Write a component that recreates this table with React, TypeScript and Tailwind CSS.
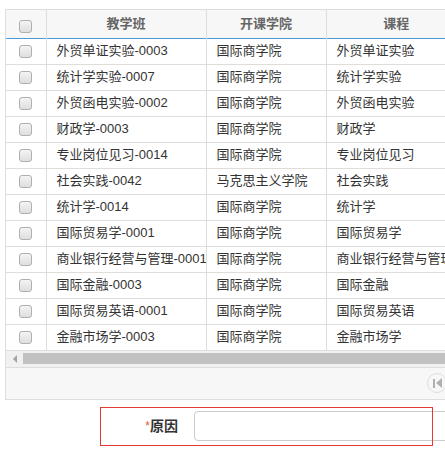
import React from 'react';

const rows = [
  ['外贸单证实验-0003', '国际商学院', '外贸单证实验'],
  ['统计学实验-0007', '国际商学院', '统计学实验'],
  ['外贸函电实验-0002', '国际商学院', '外贸函电实验'],
  ['财政学-0003', '国际商学院', '财政学'],
  ['专业岗位见习-0014', '国际商学院', '专业岗位见习'],
  ['社会实践-0042', '马克思主义学院', '社会实践'],
  ['统计学-0014', '国际商学院', '统计学'],
  ['国际贸易学-0001', '国际商学院', '国际贸易学'],
  ['商业银行经营与管理-0001', '国际商学院', '商业银行经营与管理'],
  ['国际金融-0003', '国际商学院', '国际金融'],
  ['国际贸易英语-0001', '国际商学院', '国际贸易英语'],
  ['金融市场学-0003', '国际商学院', '金融市场学'],
];

const Checkbox = () => (
  <div className="w-[13px] h-[13px] rounded-[3px] border border-[#b0b0b0] bg-gradient-to-b from-[#f4f4f4] to-[#dedede]" />
);

const App = () => {
  return (
    <div className="w-[445px] h-[451px] overflow-hidden bg-white text-[13px] text-[#333] font-['Liberation_Sans','Noto_Sans_CJK_SC',sans-serif]">
      <div className="pt-[9px] pl-[5px]">
        <div className="w-[520px] border border-[#ddd]">
          <table className="table-fixed border-collapse w-[460px]">
            <colgroup>
              <col className="w-[40px]" />
              <col className="w-[160px]" />
              <col className="w-[120px]" />
              <col className="w-[140px]" />
            </colgroup>
            <thead>
              <tr className="h-[28px] bg-[#f7f7f7] border-b border-[#4b9bd6] text-[#666] font-bold">
                <th className="p-0 border-r border-[#ddd]">
                  <div className="flex justify-center pt-[6px]">
                    <Checkbox />
                  </div>
                </th>
                <th className="p-0 border-r border-[#ddd] font-bold">教学班</th>
                <th className="p-0 border-r border-[#ddd] font-bold">开课学院</th>
                <th className="p-0 font-bold">课程</th>
              </tr>
            </thead>
            <tbody>
              {rows.map((r, i) => (
                <tr key={i} className="h-[26px] border-b border-[#e0ddd8]">
                  <td className="p-0 border-r border-[#e0ddd8]">
                    <div className="flex justify-center">
                      <Checkbox />
                    </div>
                  </td>
                  <td className="p-0 pl-[10px] border-r border-[#e0ddd8] whitespace-nowrap overflow-hidden">{r[0]}</td>
                  <td className="p-0 pl-[10px] border-r border-[#e0ddd8] whitespace-nowrap overflow-hidden">{r[1]}</td>
                  <td className="p-0 pl-[10px] whitespace-nowrap overflow-hidden">{r[2]}</td>
                </tr>
              ))}
            </tbody>
          </table>
          <div className="h-[17px] bg-[#f1f1f1] flex items-center border-b border-[#ddd]">
            <div className="w-[17px] flex justify-center">
              <div className="w-0 h-0 border-y-[4px] border-y-transparent border-r-[4px] border-r-[#a3a3a3]" />
            </div>
            <div className="flex-1 h-[11px] bg-[#c1c1c1]" />
          </div>
          <div className="h-[31px] bg-[#f7f7f7] flex items-center pl-[421px]">
            <div className="w-[20px] h-[20px] rounded-full border border-[#ddd] flex items-center justify-center gap-[1px]">
              <div className="w-[2px] h-[9px] bg-[#b0b0b0]" />
              <div className="w-0 h-0 border-y-[5px] border-y-transparent border-r-[6px] border-r-[#b0b0b0]" />
            </div>
          </div>
        </div>
      </div>
      <div className="relative mt-[7px] h-[39px] flex items-center">
        <div className="absolute left-[100px] top-0 w-[333px] h-[39px] border border-[#e53935] pointer-events-none" />
        <div className="w-[180px] shrink-0 flex justify-end items-center pr-[2px] text-[14px] font-bold">
          <span className="text-[#e25a3a] font-normal text-[12px]">*</span>
          <span>原因</span>
        </div>
        <div className="ml-[14px] w-[280px] h-[30px] rounded-[4px] border border-[#ccc] bg-white shrink-0" />
      </div>
    </div>
  );
};

export default App;
